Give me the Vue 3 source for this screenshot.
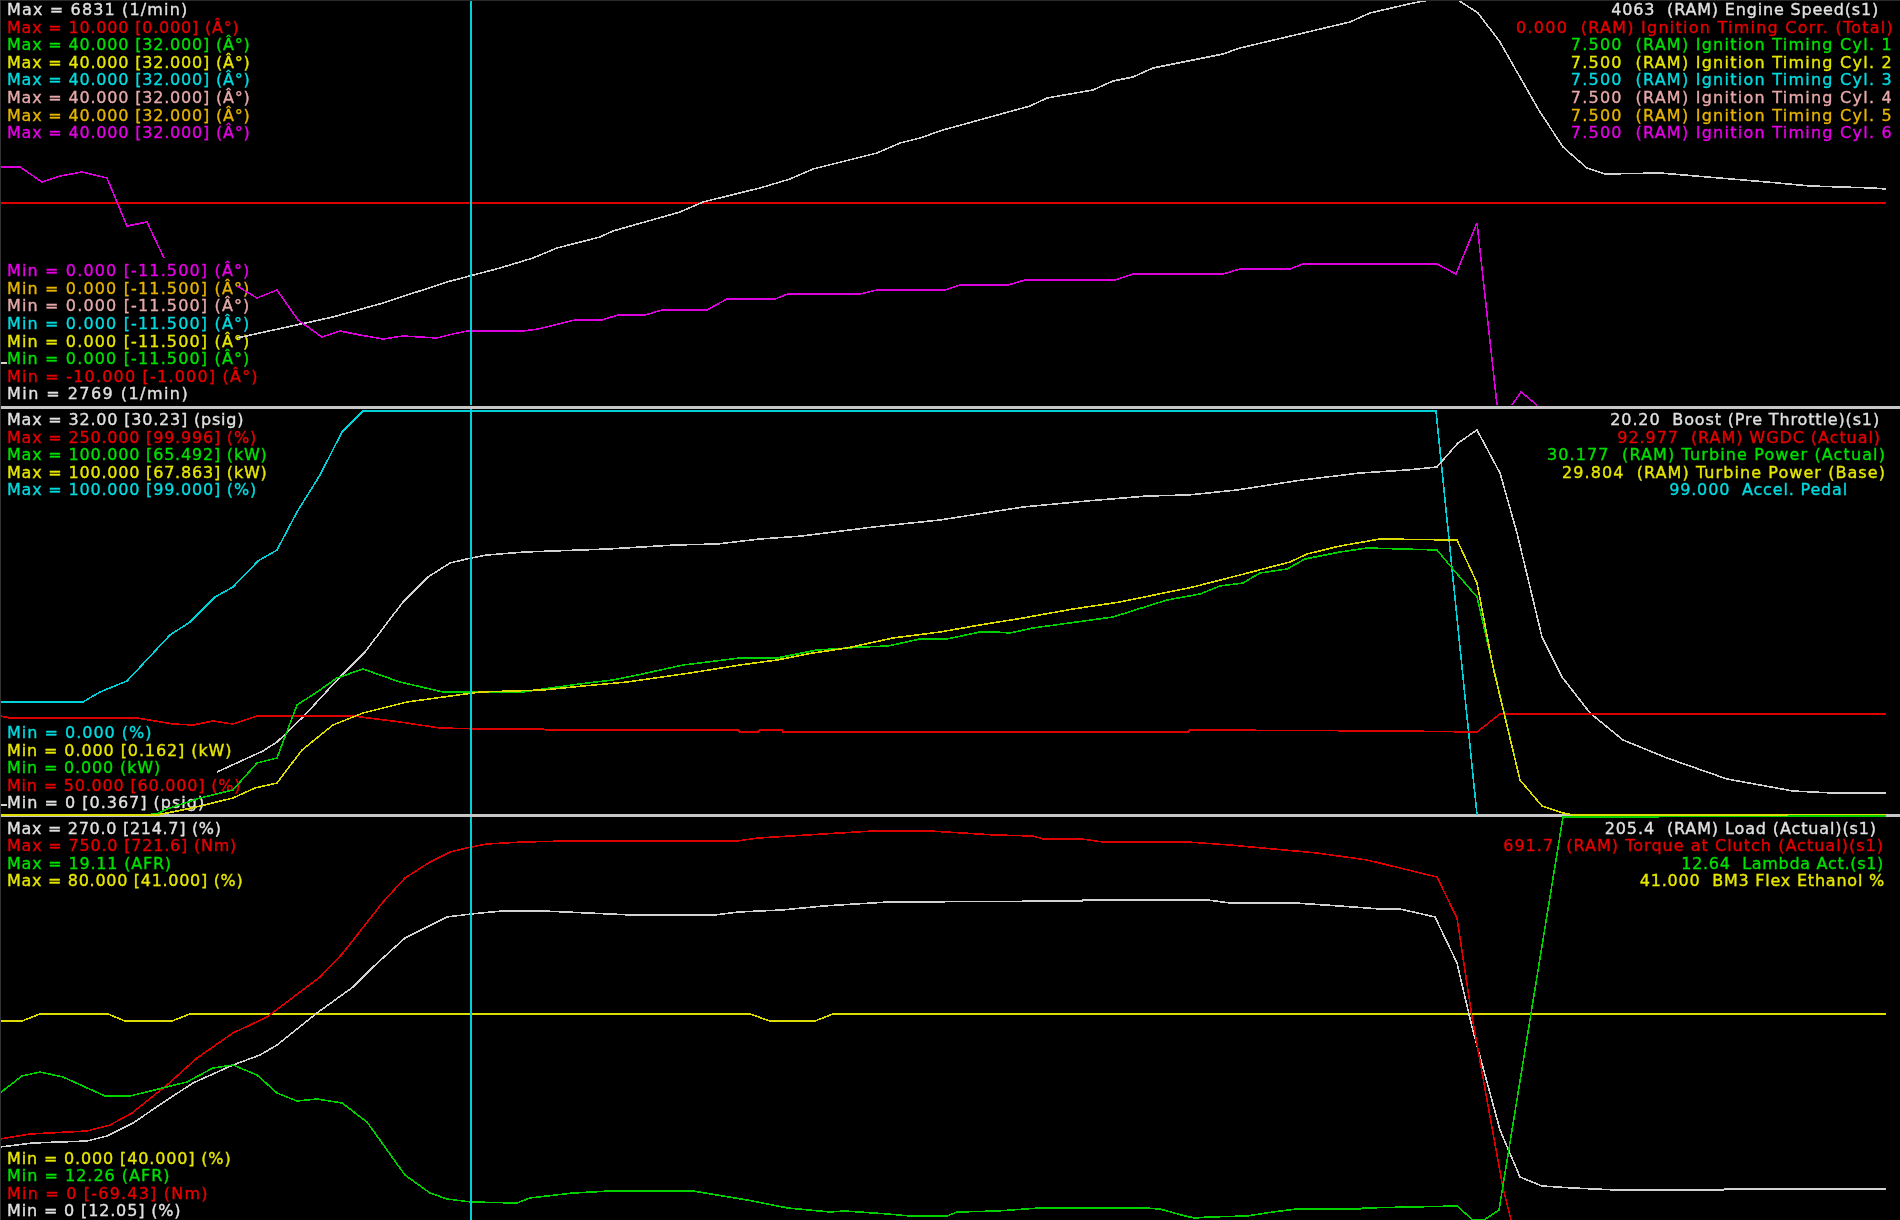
<script setup>
const panels = [
  {
    id: "timing",
    maxRows: [
      { c: "white", t: "Max = 6831 (1/min)", track: 1.15 },
      { c: "red", t: "Max = 10.000 [0.000] (Â°)" },
      { c: "green", t: "Max = 40.000 [32.000] (Â°)" },
      { c: "yellow", t: "Max = 40.000 [32.000] (Â°)" },
      { c: "cyan", t: "Max = 40.000 [32.000] (Â°)" },
      { c: "pink", t: "Max = 40.000 [32.000] (Â°)" },
      { c: "orange", t: "Max = 40.000 [32.000] (Â°)" },
      { c: "magenta", t: "Max = 40.000 [32.000] (Â°)" },
    ],
    values: [
      { c: "white", t: "4063  (RAM) Engine Speed(s1)", inset: 21, track: 0.82 },
      { c: "red", t: "0.000  (RAM) Ignition Timing Corr. (Total)", inset: 6 },
      { c: "green", t: "7.500  (RAM) Ignition Timing Cyl. 1", inset: 7 },
      { c: "yellow", t: "7.500  (RAM) Ignition Timing Cyl. 2", inset: 7 },
      { c: "cyan", t: "7.500  (RAM) Ignition Timing Cyl. 3", inset: 7 },
      { c: "pink", t: "7.500  (RAM) Ignition Timing Cyl. 4", inset: 7 },
      { c: "orange", t: "7.500  (RAM) Ignition Timing Cyl. 5", inset: 7 },
      { c: "magenta", t: "7.500  (RAM) Ignition Timing Cyl. 6", inset: 7 },
    ],
    minRows: [
      { c: "magenta", t: "Min = 0.000 [-11.500] (Â°)", track: 1.15 },
      { c: "orange", t: "Min = 0.000 [-11.500] (Â°)", track: 1.15 },
      { c: "pink", t: "Min = 0.000 [-11.500] (Â°)", track: 1.15 },
      { c: "cyan", t: "Min = 0.000 [-11.500] (Â°)", track: 1.15 },
      { c: "yellow", t: "Min = 0.000 [-11.500] (Â°)", track: 1.15 },
      { c: "green", t: "Min = 0.000 [-11.500] (Â°)", track: 1.15 },
      { c: "red", t: "Min = -10.000 [-1.000] (Â°)", track: 1.2 },
      { c: "white", t: "Min = 2769 (1/min)", track: 1.45 },
    ],
  },
  {
    id: "boost",
    maxRows: [
      { c: "white", t: "Max = 32.00 [30.23] (psig)" },
      { c: "red", t: "Max = 250.000 [99.996] (%)" },
      { c: "green", t: "Max = 100.000 [65.492] (kW)" },
      { c: "yellow", t: "Max = 100.000 [67.863] (kW)" },
      { c: "cyan", t: "Max = 100.000 [99.000] (%)" },
    ],
    values: [
      { c: "white", t: "20.20  Boost (Pre Throttle)(s1)", inset: 20, track: 0.86 },
      { c: "red", t: "92.977  (RAM) WGDC (Actual)", inset: 19, track: 0.94 },
      { c: "green", t: "30.177  (RAM) Turbine Power (Actual)", inset: 14, track: 1.12 },
      { c: "yellow", t: "29.804  (RAM) Turbine Power (Base)", inset: 14, track: 1.07 },
      { c: "cyan", t: "99.000  Accel. Pedal", inset: 52, track: 0.83 },
    ],
    minRows: [
      { c: "cyan", t: "Min = 0.000 (%)" },
      { c: "yellow", t: "Min = 0.000 [0.162] (kW)", track: 0.9 },
      { c: "green", t: "Min = 0.000 (kW)", track: 0.85 },
      { c: "red", t: "Min = 50.000 [60.000] (%)", track: 0.8 },
      { c: "white", t: "Min = 0 [0.367] (psig)" },
    ],
  },
  {
    id: "load",
    maxRows: [
      { c: "white", t: "Max = 270.0 [214.7] (%)", track: 0.7 },
      { c: "red", t: "Max = 750.0 [721.6] (Nm)" },
      { c: "green", t: "Max = 19.11 (AFR)" },
      { c: "yellow", t: "Max = 80.000 [41.000] (%)", track: 0.7 },
    ],
    values: [
      { c: "white", t: "205.4  (RAM) Load (Actual)(s1)", inset: 23, track: 0.88 },
      { c: "red", t: "691.7  (RAM) Torque at Clutch (Actual)(s1)", inset: 16, track: 1.02 },
      { c: "green", t: "12.64  Lambda Act.(s1)", inset: 16, track: 0.7 },
      { c: "yellow", t: "41.000  BM3 Flex Ethanol %", inset: 15, track: 0.78 },
    ],
    minRows: [
      { c: "yellow", t: "Min = 0.000 [40.000] (%)", track: 0.85 },
      { c: "green", t: "Min = 12.26 (AFR)" },
      { c: "red", t: "Min = 0 [-69.43] (Nm)", track: 1.2 },
      { c: "white", t: "Min = 0 [12.05] (%)", track: 0.85 },
    ],
  },
];

function rowStyle(row) {
  const style = {};
  if (row.inset) style.paddingRight = row.inset + "px";
  if (row.track) style.letterSpacing = row.track + "px";
  return style;
}

// log traces, in page pixels
const traces = [
  // timing panel
  { c: "red", p: "0,203 1886,203" },
  { c: "white", p: "237,338 333,317 383,303 447,282 500,268 533,258 557,248 600,237 613,231 680,212 703,202 760,188 790,179 813,169 877,153 900,143 920,138 943,130 1030,106 1047,98 1093,90 1113,81 1133,77 1153,68 1223,54 1240,48 1350,22 1370,13 1413,3 1430,0 1458,0 1478,13 1500,42 1517,72 1540,112 1563,147 1587,168 1605,174 1660,173 1767,182 1810,186 1873,188 1886,189" },
  { c: "white", p: "0,363 7,363" },
  { c: "magenta", p: "0,167 20,167 42,182 60,176 82,172 107,178 127,226 147,222 164,258" },
  { c: "magenta", p: "237,286 257,298 277,290 298,320 322,337 340,331 360,335 383,339 403,336 437,338 457,333 468,331 523,331 538,329 575,320 602,320 618,315 645,315 662,310 707,310 727,299 775,299 788,294 860,294 877,290 945,290 960,285 1008,285 1025,280 1115,280 1133,274 1223,274 1240,269 1290,269 1303,264 1437,264 1456,274 1477,223 1497,405" },
  { c: "magenta", p: "1512,405 1521,392 1537,405" },
  // boost panel
  { c: "cyan", p: "0,702 83,702 100,692 127,681 170,635 190,622 215,597 233,587 258,561 277,550 297,512 320,475 342,432 363,411 1436,411 1477,815" },
  { c: "white", p: "217,772 263,751 277,742 303,717 340,677 365,652 403,602 428,577 450,563 471,558 487,555 525,552 608,549 675,545 717,544 760,539 802,536 873,527 940,520 1023,507 1087,501 1147,496 1188,495 1237,490 1302,480 1360,473 1407,470 1437,467 1458,443 1477,430 1500,473 1517,533 1542,637 1562,677 1590,713 1623,740 1667,758 1727,779 1793,791 1833,793 1886,793" },
  { c: "white", p: "0,805 7,805" },
  { c: "red", p: "0,716 10,718 137,718 173,724 193,725 213,721 233,724 257,716 353,716 400,722 440,728 482,729 543,729 546,730 738,730 740,732 758,732 760,730 782,730 783,732 1188,732 1190,730 1400,731 1477,732 1500,714 1886,714" },
  { c: "green", p: "137,815 157,814 167,809 200,798 233,790 257,763 277,758 297,705 317,692 337,678 363,669 400,682 443,692 523,692 543,689 587,683 613,680 647,673 683,665 740,658 777,658 817,650 863,647 888,646 920,639 947,639 980,632 995,632 1010,633 1033,628 1113,617 1167,600 1200,594 1220,586 1243,583 1260,573 1287,569 1305,559 1340,552 1367,548 1402,549 1437,550 1452,568 1477,597 1490,653 1520,780" },
  { c: "yellow", p: "0,815 157,815 192,808 233,798 255,788 277,783 302,750 333,725 363,713 407,702 480,692 543,690 583,686 627,682 690,673 740,665 777,660 813,653 847,648 893,638 940,632 980,625 1023,618 1073,609 1120,602 1193,587 1240,575 1290,562 1307,554 1340,546 1380,539 1457,540 1477,583 1493,667 1520,780 1542,806 1563,813 1573,815 1886,815" },
  // load panel
  { c: "yellow", p: "0,1021 22,1021 40,1014 108,1014 125,1021 172,1021 190,1014 750,1014 770,1021 815,1021 833,1014 1886,1014" },
  { c: "white", p: "0,1147 33,1143 87,1141 107,1136 133,1123 167,1100 193,1083 233,1065 260,1055 277,1045 317,1013 353,987 373,967 405,938 447,917 471,914 502,911 543,911 588,913 632,915 715,915 738,912 782,910 823,906 888,902 1082,901 1083,900 1208,900 1230,903 1295,903 1340,906 1380,909 1400,909 1435,917 1457,963 1472,1027 1500,1130 1520,1177 1542,1186 1573,1188 1617,1190 1723,1190 1725,1189 1886,1189" },
  { c: "red", p: "0,1139 30,1134 87,1131 110,1125 132,1113 167,1085 197,1058 233,1033 267,1017 320,977 343,953 383,902 405,878 430,862 450,852 471,847 487,844 523,842 567,841 737,841 758,838 823,834 873,831 930,831 995,835 1033,836 1043,839 1082,839 1103,842 1188,842 1230,845 1317,853 1367,860 1400,868 1437,877 1457,918 1472,1017 1503,1188 1511,1220" },
  { c: "green", p: "0,1093 22,1076 40,1072 63,1077 105,1096 130,1096 187,1082 213,1068 233,1065 257,1075 277,1093 297,1101 317,1099 342,1103 367,1122 405,1175 430,1193 447,1199 471,1202 517,1203 530,1198 573,1193 610,1191 693,1191 747,1200 788,1208 830,1212 845,1211 888,1214 910,1216 947,1216 957,1212 997,1211 1039,1208 1145,1208 1160,1209 1185,1216 1195,1218 1208,1217 1247,1216 1273,1212 1297,1209 1360,1209 1363,1208 1457,1206 1473,1220 1484,1220 1499,1210 1563,817 1886,816" },
  // cursor, stops at the panel dividers
  { c: "cyan", p: "471,0 471,405" },
  { c: "cyan", p: "471,409 471,814" },
  { c: "cyan", p: "471,817 471,1220" },
];
</script>

<template>
  <div class="scope">
    <section v-for="panel in panels" :key="panel.id" class="panel" :class="panel.id">
      <div class="legendTop">
        <ul class="legend maxRows">
          <li v-for="row in panel.maxRows" :key="row.c + row.t" :class="row.c" :style="rowStyle(row)">{{ row.t }}</li>
        </ul>
        <ul class="legend values">
          <li v-for="row in panel.values" :key="row.t" :class="row.c" :style="rowStyle(row)">{{ row.t }}</li>
        </ul>
      </div>
      <ul class="legend minRows">
        <li v-for="row in panel.minRows" :key="row.c + row.t" :class="row.c" :style="rowStyle(row)">{{ row.t }}</li>
      </ul>
    </section>

    <svg class="traces" width="1900" height="1220" viewBox="0 0 1900 1220">
      <polyline
        v-for="(trace, i) in traces"
        :key="i"
        :points="trace.p"
        :class="'line-' + trace.c"
      />
    </svg>
  </div>
</template>

<style>
html,
body {
  background: #000;
}
</style>

<style scoped>
.scope {
  position: relative;
  width: 1900px;
  height: 1220px;
  display: grid;
  grid-template-rows: 408px 408px 403px;
  background: #000;
  overflow: hidden;
  box-sizing: border-box;
  border-top: 1px solid #2a2a2a;
  border-left: 1px solid #333;
}

.panel {
  display: flex;
  flex-direction: column;
  justify-content: space-between;
  box-sizing: border-box;
  border-bottom: 3.5px solid #c6c6c6;
}

.timing {
  padding: 0 0 3px;
}

.boost {
  padding: 2px 0;
}

.load {
  padding: 2.5px 0 0;
  border-bottom: none;
}

.legendTop {
  display: flex;
  justify-content: space-between;
}

.legend {
  list-style: none;
  margin: 0;
  padding: 0 0 0 6px;
  font-family: "DejaVu Sans", Verdana, sans-serif;
  font-size: 16px;
  line-height: 17.6px;
  white-space: pre;
  -webkit-text-stroke: 0.35px currentColor;
  filter: blur(0.35px);
}

.maxRows {
  letter-spacing: 0.8px;
}

.minRows {
  letter-spacing: 1px;
}

.values {
  padding-left: 0;
  text-align: right;
  letter-spacing: 1.25px;
}

.white { color: #e0e0e0; }
.red { color: #e60000; }
.green { color: #00e000; }
.yellow { color: #e6e600; }
.cyan { color: #00dbe0; }
.pink { color: #e6a8a8; }
.orange { color: #e6b400; }
.magenta { color: #e600e6; }

.traces {
  position: absolute;
  top: -1px;
  left: -1px;
  pointer-events: none;
}

.traces polyline {
  fill: none;
  stroke-width: 1.6;
  shape-rendering: crispEdges;
}

.line-white { stroke: #d2d2d2; }
.line-red { stroke: #dc0000; }
.line-green { stroke: #00d000; }
.line-yellow { stroke: #dcdc00; }
.line-cyan { stroke: #00d0d8; }
.line-magenta { stroke: #dc00dc; }
</style>
